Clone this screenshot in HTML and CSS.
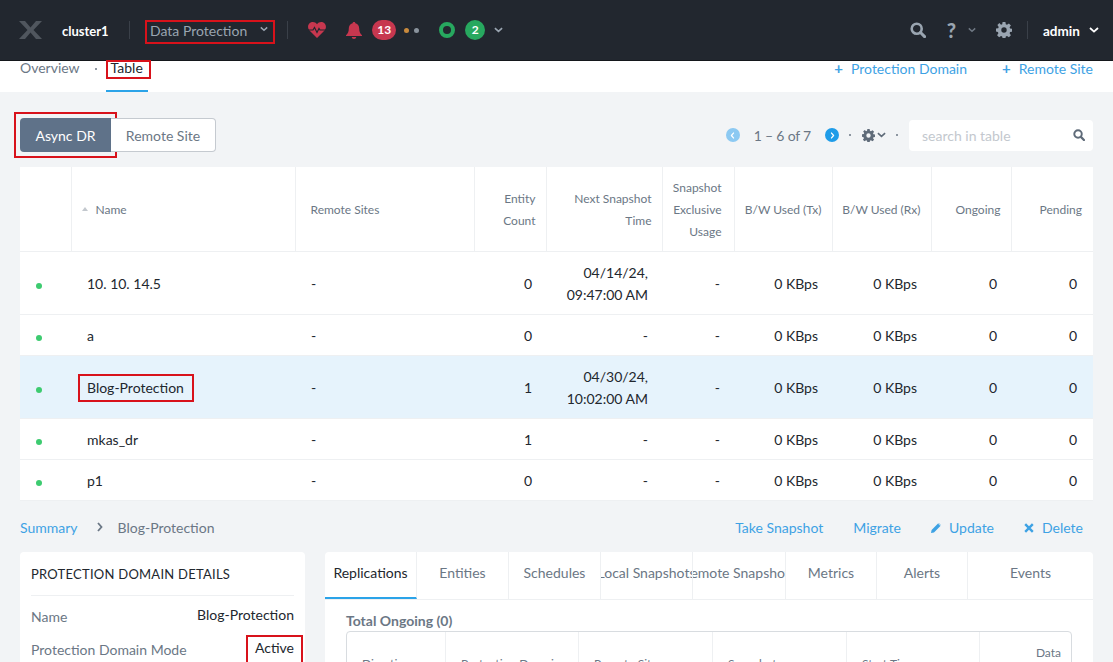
FILE: index.html
```html
<!DOCTYPE html>
<html lang="en">
<head>
<meta charset="UTF-8" />
<meta name="viewport" content="width=device-width, initial-scale=1.0">
<title>Data Protection</title>
<link rel="stylesheet" href="styles.css">
</head>
<body>

<svg class="sprite" width="0" height="0">
  <symbol id="i-search" viewBox="0 0 16 16"><circle cx="6.7" cy="6.7" r="5" fill="none" stroke="currentColor" stroke-width="2.6"/><path d="M10.5 10.5L14.6 14.6" stroke="currentColor" stroke-width="3" stroke-linecap="round"/></symbol>
  <symbol id="i-gear" viewBox="0 0 16 16"><path fill="currentColor" fill-rule="evenodd" d="M6.6 0h2.8l.4 2.2 1.2.5 1.9-1.3 2 2-1.3 1.9.5 1.2 2.2.4v2.8l-2.2.4-.5 1.2 1.3 1.9-2 2-1.9-1.3-1.2.5-.4 2.2H6.6l-.4-2.2-1.2-.5-1.9 1.3-2-2 1.3-1.9-.5-1.2L0 9.4V6.6l2.2-.4.5-1.2-1.3-1.9 2-2L5 2.700l1.200-.5zM8 5.300a2.700 2.700 0 1 0 0 5.400 2.700 2.700 0 0 0 0-5.400z"/></symbol>
  <symbol id="i-chev" viewBox="0 0 10 6"><path d="M1 1l4 3.600L9 1" fill="none" stroke="currentColor" stroke-width="1.800"/></symbol>
</svg>

<header class="topbar">
  <svg class="logo" viewBox="0 0 23 18"><path d="M0 0h6l5.500 6.500L17 0h6l-8.500 9L23 18h-6l-5.500-6.500L6 18H0l8.500-9z" fill="#50565e"/></svg>
  <span class="cluster">cluster1</span>
  <span class="divider"></span>
  <div class="perspective">
    Data Protection
    <svg class="chev chev-small"><use href="#i-chev"/></svg>
    <i class="mark"></i>
  </div>
  <span class="divider"></span>
  <svg class="heart" viewBox="0 0 18 16"><path d="M9 16L1.500 8.500C-1.500 5 .5 0 4.800 0 6.500 0 8 .8 9 2.200 10 .8 11.500 0 13.200 0c4.300 0 6.300 5 3.300 8.500z" fill="#c7374f"/><path d="M0 8h5l1.500-2.500 2.500 5 2-4 1 1.500h6" fill="none" stroke="#22272f" stroke-width="1.200"/></svg>
  <svg class="bell" viewBox="0 0 16 17"><path d="M8 0c.8 0 1.300.5 1.400 1.200C12 1.800 13.200 4 13.200 6.500c0 3.500 1 5 2.800 6.800v.7H0v-.7c1.800-1.800 2.800-3.300 2.800-6.800 0-2.500 1.200-4.700 3.800-5.300C6.700.5 7.200 0 8 0zM5.800 15h4.400c0 1.200-1 2-2.200 2s-2.200-.8-2.200-2z" fill="#c7374f"/></svg>
  <span class="badge badge-red">13</span>
  <span class="dot dot-orange"></span>
  <span class="dot dot-gray"></span>
  <span class="ring"></span>
  <span class="badge badge-green">2</span>
  <svg class="chev chev-health"><use href="#i-chev"/></svg>

  <div class="topbar-right">
    <svg class="top-icon"><use href="#i-search"/></svg>
    <span class="help">?</span>
    <svg class="chev chev-help"><use href="#i-chev"/></svg>
    <svg class="top-icon gear"><use href="#i-gear"/></svg>
    <span class="divider"></span>
    <span class="user">admin</span>
    <svg class="chev chev-user"><use href="#i-chev"/></svg>
  </div>
</header>

<nav class="subnav">
  <a class="subnav-link">Overview</a>
  <span class="subnav-sep"></span>
  <a class="subnav-link active">Table<i class="mark"></i></a>
  <div class="subnav-actions">
    <a class="link"><span class="plus">+</span>Protection Domain</a>
    <a class="link"><span class="plus">+</span>Remote Site</a>
  </div>
</nav>

<main class="content">
  <div class="toolbar">
    <div class="btn-group">
      <button class="btn btn-on">Async DR<i class="mark"></i></button>
      <button class="btn">Remote Site</button>
    </div>
    <div class="pager">
      <span class="page-arrow page-off"><svg viewBox="0 0 10 6"><use href="#i-chev"/></svg></span>
      <span class="page-text">1 – 6 of 7</span>
      <span class="page-arrow page-next"><svg viewBox="0 0 10 6"><use href="#i-chev"/></svg></span>
      <span class="mini-sep sep-first"></span>
      <svg class="pager-gear"><use href="#i-gear"/></svg>
      <svg class="chev chev-pager"><use href="#i-chev"/></svg>
      <span class="mini-sep sep-last"></span>
      <div class="search">
        <span>search in table</span>
        <svg><use href="#i-search"/></svg>
      </div>
    </div>
  </div>

  <table class="grid">
    <colgroup>
      <col class="c-status"><col class="c-name"><col class="c-sites"><col class="c-count"><col class="c-next">
      <col class="c-excl"><col class="c-tx"><col class="c-rx"><col class="c-ongoing"><col class="c-pending">
    </colgroup>
    <thead>
      <tr>
        <th></th>
        <th class="left name-head"><span class="sort"></span>Name</th>
        <th class="left">Remote Sites</th>
        <th>Entity<br>Count</th>
        <th>Next Snapshot<br>Time</th>
        <th class="th-excl">Snapshot<br>Exclusive<br>Usage</th>
        <th>B/W Used (Tx)</th>
        <th>B/W Used (Rx)</th>
        <th>Ongoing</th>
        <th class="th-pending">Pending</th>
      </tr>
    </thead>
    <tbody>
      <tr class="tall">
        <td class="left"><span class="status"></span></td>
        <td class="left name">10. 10. 14.5</td>
        <td class="left">-</td>
        <td>0</td>
        <td>04/14/24,<br>09:47:00 AM</td>
        <td>-</td>
        <td>0 KBps</td>
        <td>0 KBps</td>
        <td>0</td>
        <td class="td-pending">0</td>
      </tr>
      <tr>
        <td class="left"><span class="status"></span></td>
        <td class="left name">a</td>
        <td class="left">-</td>
        <td>0</td>
        <td>-</td>
        <td>-</td>
        <td>0 KBps</td>
        <td>0 KBps</td>
        <td>0</td>
        <td class="td-pending">0</td>
      </tr>
      <tr class="tall selected">
        <td class="left"><span class="status"></span></td>
        <td class="left name"><span class="marked">Blog-Protection<i class="mark"></i></span></td>
        <td class="left">-</td>
        <td>1</td>
        <td>04/30/24,<br>10:02:00 AM</td>
        <td>-</td>
        <td>0 KBps</td>
        <td>0 KBps</td>
        <td>0</td>
        <td class="td-pending">0</td>
      </tr>
      <tr>
        <td class="left"><span class="status"></span></td>
        <td class="left name">mkas_dr</td>
        <td class="left">-</td>
        <td>1</td>
        <td>-</td>
        <td>-</td>
        <td>0 KBps</td>
        <td>0 KBps</td>
        <td>0</td>
        <td class="td-pending">0</td>
      </tr>
      <tr>
        <td class="left"><span class="status"></span></td>
        <td class="left name">p1</td>
        <td class="left">-</td>
        <td>0</td>
        <td>-</td>
        <td>-</td>
        <td>0 KBps</td>
        <td>0 KBps</td>
        <td>0</td>
        <td class="td-pending">0</td>
      </tr>
    </tbody>
  </table>

  <div class="summary-bar">
    <a class="link">Summary</a>
    <svg class="crumb-arrow" viewBox="0 0 6 10"><path d="M1 1l3.500 4L1 9" fill="none" stroke="currentColor" stroke-width="1.800"/></svg>
    <span class="crumb">Blog-Protection</span>
    <div class="summary-actions">
      <a class="link">Take Snapshot</a>
      <a class="link">Migrate</a>
      <a class="link"><svg class="act-icon" viewBox="0 0 10 10"><path d="M0 10l.6-3L7 .6 9.400 3 3 9.400zM7.800 0L10 2.200 9.800 2.600 7.400.2z" fill="currentColor"/></svg>Update</a>
      <a class="link"><svg class="act-icon" viewBox="0 0 10 10"><path d="M1.200 1.200l7.600 7.600M8.800 1.200L1.200 8.800" stroke="currentColor" stroke-width="2.400"/></svg>Delete</a>
    </div>
  </div>

  <div class="panels">
    <section class="details">
      <h2>PROTECTION DOMAIN DETAILS</h2>
      <div class="detail-row">
        <span>Name</span>
        <strong>Blog-Protection</strong>
      </div>
      <div class="detail-row">
        <span>Protection Domain Mode</span>
        <strong class="marked">Active<i class="mark"></i></strong>
      </div>
    </section>

    <section class="tabs-panel">
      <div class="tabs">
        <a class="tab t-rep active">Replications</a>
        <a class="tab t-ent">Entities</a>
        <a class="tab t-sch">Schedules</a>
        <a class="tab t-loc"><span>Local Snapshots</span></a>
        <a class="tab t-rem"><span>Remote Snapshots</span></a>
        <a class="tab t-met">Metrics</a>
        <a class="tab t-ale">Alerts</a>
        <a class="tab t-eve">Events</a>
      </div>
      <div class="tab-body">
        <h3>Total Ongoing (0)</h3>
        <div class="inner-head">
          <span class="ih-dir">Direction</span>
          <span class="ih-dom">Protection Domain</span>
          <span class="ih-site">Remote Site</span>
          <span class="ih-snap">Snapshot</span>
          <span class="ih-start">Start Time</span>
          <span class="ih-data">Data</span>
        </div>
      </div>
    </section>
  </div>
</main>

</body>
</html>
```

FILE: styles.css
```css
* {
  box-sizing: border-box;
}

html, body {
  height: 662px;
  overflow: hidden;
}

body {
  margin: 0;
  font-family: 'Lato', 'Open Sans', sans-serif;
  font-size: 14px;
  color: #22272e;
  background: #f2f4f6;
}

.sprite {
  position: absolute;
}

.mark {
  position: absolute;
  border: 2px solid #d8121b;
  pointer-events: none;
}

.link {
  color: #3ea2e4;
  white-space: nowrap;
}

/* Top bar */
.topbar {
  display: flex;
  align-items: center;
  height: 61px;
  padding-left: 19px;
  background: #22272f;
  border-bottom: 1px solid #14171b;
}

.logo {
  width: 23px;
  height: 18px;
}

.cluster {
  width: 47px;
  margin: 2px 0 0 20px;
  color: #fff;
  font-size: 13px;
  font-weight: 700;
}

.divider {
  width: 1px;
  height: 18px;
  margin-left: 20px;
  background: #3a4049;
}

.perspective {
  position: relative;
  display: flex;
  align-items: center;
  margin-left: 20px;
  color: #9aa5b1;
}

.perspective .mark {
  top: -2px;
  bottom: -5px;
  left: -5px;
  width: 130px;
}

.chev {
  width: 10px;
  height: 6px;
  color: #9aa5b1;
}

.chev-small {
  width: 8px;
  margin-left: 13px;
  margin-bottom: 3px;
}

.perspective + .divider {
  margin-left: 19px;
}

.heart {
  width: 18px;
  height: 16px;
  margin-left: 20px;
}

.bell {
  width: 16px;
  height: 17px;
  margin-left: 20px;
}

.badge {
  min-width: 20px;
  height: 20px;
  padding: 0 5px;
  border-radius: 10px;
  color: #fff;
  font-size: 12px;
  font-weight: 700;
  line-height: 20px;
  text-align: center;
}

.badge-red {
  width: 24px;
  margin-left: 10px;
  background: #c7374f;
}

.badge-green {
  width: 20px;
  margin-left: 10px;
  background: #27a85f;
}

.dot {
  width: 5px;
  height: 5px;
  border-radius: 50%;
}

.dot-orange {
  margin-left: 8px;
  background: #c98a3d;
}

.dot-gray {
  margin-left: 5px;
  background: #8a939d;
}

.ring {
  width: 16px;
  height: 16px;
  margin-left: 20px;
  border: 4px solid #27a85f;
  border-radius: 50%;
}

.chev-health {
  width: 9px;
  margin-left: 9px;
}

.topbar-right {
  display: flex;
  align-items: center;
  margin-left: auto;
  padding-right: 14px;
}

.top-icon {
  width: 16px;
  height: 16px;
  color: #9aa5b1;
}

.help {
  margin-left: 21px;
  color: #9aa5b1;
  font-size: 20px;
  font-weight: 900;
  line-height: 20px;
}

.chev-help {
  width: 8px;
  margin-left: 12px;
  color: #6f7883;
}

.gear {
  margin-left: 20px;
}

.topbar-right .divider {
  margin-left: 15px;
}

.user {
  width: 38px;
  margin: 2px 0 0 15px;
  color: #fff;
  font-size: 13.5px;
  font-weight: 700;
}

.chev-user {
  margin-left: 8px;
  color: #fff;
}

/* Sub navigation */
.subnav {
  display: flex;
  height: 31px;
  padding-left: 20px;
  background: #fff;
  color: #6b7785;
}

.subnav-link {
  position: relative;
  line-height: 14px;
}

.subnav-sep {
  width: 2px;
  height: 2px;
  margin: 7px 14px 0 15px;
  border-radius: 50%;
  background: #6b7785;
}

.subnav-link.active {
  padding: 0 5px;
  margin-left: -5px;
  color: #22272e;
  border-bottom: 2px solid #2ba3e8;
}

.subnav-link .mark {
  top: -1px;
  left: 0;
  width: 45px;
  height: 19px;
}

.subnav-actions {
  display: flex;
  gap: 35px;
  margin-left: auto;
  padding-right: 20px;
  line-height: 14px;
}

.plus {
  margin-right: 8px;
  font-weight: 700;
  font-size: 15px;
}

/* Toolbar */
.content {
  padding: 0 20px;
}

.toolbar {
  display: flex;
  justify-content: space-between;
  align-items: center;
  height: 34px;
  margin-top: 26px;
}

.btn-group {
  display: flex;
}

.btn {
  position: relative;
  height: 34px;
  padding: 0;
  width: 105px;
  border: 1px solid #c5cad0;
  border-left: 0;
  border-radius: 0 4px 4px 0;
  background: #fff;
  color: #6b7785;
  font-family: inherit;
  font-size: 14px;
}

.btn-on {
  width: 91px;
  border: 0;
  border-radius: 4px 0 0 4px;
  background: #5f7289;
  color: #fff;
}

.btn .mark {
  top: -6px;
  bottom: -6px;
  left: -6px;
  right: -6px;
}

.pager {
  display: flex;
  align-items: center;
  color: #6b7785;
}

.page-arrow {
  display: flex;
  align-items: center;
  justify-content: center;
  width: 14px;
  height: 14px;
  border-radius: 50%;
  color: #fff;
}

.page-arrow svg {
  width: 7px;
  height: 5px;
}

.page-off {
  background: #8cc9f2;
}

.page-off svg {
  transform: rotate(90deg);
}

.page-next {
  background: #1f9ce8;
}

.page-next svg {
  transform: rotate(-90deg);
}

.page-text {
  margin: 0 14px;
  letter-spacing: -0.2px;
}

.mini-sep {
  width: 2px;
  height: 2px;
  border-radius: 50%;
  background: #6b7785;
}

.sep-first {
  margin: 0 11px 0 10px;
}

.sep-last {
  margin: 0 11px 0 10px;
}

.pager-gear {
  width: 13px;
  height: 13px;
  color: #5f6b79;
}

.chev-pager {
  width: 9px;
  margin-left: 2px;
  color: #5f6b79;
}

.search {
  display: flex;
  align-items: center;
  justify-content: space-between;
  width: 184px;
  height: 31px;
  padding: 0 8px 0 13px;
  border-radius: 4px;
  background: #fff;
  color: #c3c8ce;
}

.search svg {
  width: 12px;
  height: 12px;
  color: #5f6b79;
}

/* Main table */
.grid {
  width: 1073px;
  margin-top: 15px;
  border-collapse: collapse;
  table-layout: fixed;
  background: #fff;
}

.c-status { width: 51px; }
.c-name { width: 224px; }
.c-sites { width: 179px; }
.c-count { width: 72px; }
.c-next { width: 116px; }
.c-excl { width: 72px; }
.c-tx { width: 98px; }
.c-rx { width: 99px; }
.c-ongoing { width: 80px; }
.c-pending { width: 82px; }

.grid th {
  height: 84px;
  padding: 2px 10px 0 0;
  border-left: 1px solid #eef0f2;
  border-bottom: 1px solid #eef0f2;
  color: #6b7785;
  font-size: 12px;
  font-weight: 400;
  line-height: 22px;
  text-align: right;
  white-space: nowrap;
}

.grid th:first-child {
  border-left: 0;
}

.grid th.left {
  padding-left: 15px;
  text-align: left;
}

.grid th.name-head {
  padding-left: 10px;
}

.grid th.th-excl {
  padding-right: 12px;
}

.grid th.th-pending {
  padding-right: 11px;
}

.sort {
  display: inline-block;
  margin: 0 8px 3px 0;
  border: 3px solid transparent;
  border-top: 0;
  border-bottom: 4px solid #c3c8ce;
  vertical-align: middle;
}

.grid td {
  height: 41px;
  padding: 2px 14px 0 0;
  border-bottom: 1px solid #eef0f2;
  line-height: 22px;
  text-align: right;
}

.grid tr.tall td {
  height: 63px;
}

.grid td.left {
  padding-left: 16px;
  text-align: left;
}

.grid td.name {
  padding-left: 16px;
}

.grid td.td-pending {
  padding-right: 16px;
}

.grid tr.selected td {
  background: #e6f3fc;
}

.status {
  display: inline-block;
  width: 6px;
  height: 6px;
  margin: 3px 0 0 0;
  border-radius: 50%;
  background: #3dcb70;
}

.marked {
  position: relative;
  display: inline-block;
}

.name .mark {
  top: -3px;
  bottom: -3px;
  left: -9px;
  width: 116px;
}

/* Summary */
.summary-bar {
  display: flex;
  align-items: center;
  height: 17px;
  margin-top: 18px;
}

.crumb-arrow {
  width: 6px;
  height: 10px;
  margin: 0 15px 0 19px;
  color: #6b7785;
}

.crumb {
  color: #6b7785;
}

.summary-actions {
  display: flex;
  gap: 30px;
  margin-left: auto;
  padding-right: 10px;
}

.act-icon {
  width: 10px;
  height: 10px;
  margin-right: 8px;
}

/* Bottom panels */
.panels {
  display: flex;
  gap: 20px;
  height: 110px;
  margin-top: 16px;
  overflow: hidden;
}

.details {
  width: 285px;
  padding: 0 11px;
  border-radius: 4px 4px 0 0;
  background: #fff;
  color: #6b7785;
}

.details h2 {
  margin: 0 0 8px;
  height: 44px;
  border-bottom: 1px solid #eef0f2;
  color: #22272e;
  font-size: 13px;
  font-weight: 400;
  letter-spacing: 0.25px;
  line-height: 44px;
}

.detail-row {
  display: flex;
  justify-content: space-between;
  height: 33px;
  line-height: 25px;
}

.detail-row strong {
  color: #22272e;
  font-weight: 400;
  line-height: 22px;
}

.details .mark {
  top: -2px;
  left: -9px;
  width: 57px;
  height: 34px;
}

.tabs-panel {
  width: 768px;
  border-radius: 4px 4px 0 0;
  background: #fff;
}

.tabs {
  display: flex;
  height: 48px;
  border-bottom: 1px solid #eef0f2;
}

.tab {
  display: flex;
  justify-content: center;
  align-items: center;
  padding-bottom: 6px;
  overflow: hidden;
  border-right: 1px solid #eef0f2;
  color: #6b7785;
  white-space: nowrap;
}

.tab.active {
  padding-bottom: 4px;
  color: #22272e;
  border-bottom: 2px solid #2ba3e8;
}

.tab span {
  flex-shrink: 0;
}

.t-rep { width: 92px; }
.t-ent { width: 92px; }
.t-sch { width: 92px; }
.t-loc { width: 92px; }
.t-rem { width: 93px; }
.t-met { width: 91px; }
.t-ale { width: 91px; }
.t-eve { width: 125px; border-right: 0; }

.tab-body {
  padding: 0 21px;
}

.tab-body h3 {
  margin: 12px 0 2px;
  color: #6b7785;
  font-size: 14px;
  font-weight: 700;
  line-height: 17px;
}

.inner-head {
  display: flex;
  align-items: flex-start;
  height: 60px;
  border: 1px solid #d8dce0;
  border-radius: 4px 4px 0 0;
  color: #6b7785;
  font-size: 12px;
}

.inner-head span {
  height: 60px;
  padding: 24px 0 0 15px;
  border-left: 1px solid #eef0f2;
  white-space: nowrap;
}

.inner-head .ih-dir { width: 98px; border-left: 0; }
.inner-head .ih-dom { width: 133px; }
.inner-head .ih-site { width: 134px; }
.inner-head .ih-snap { width: 134px; }
.inner-head .ih-start { width: 133px; }

.inner-head .ih-data {
  flex: 1;
  padding: 13px 10px 0 0;
  text-align: right;
}
```
